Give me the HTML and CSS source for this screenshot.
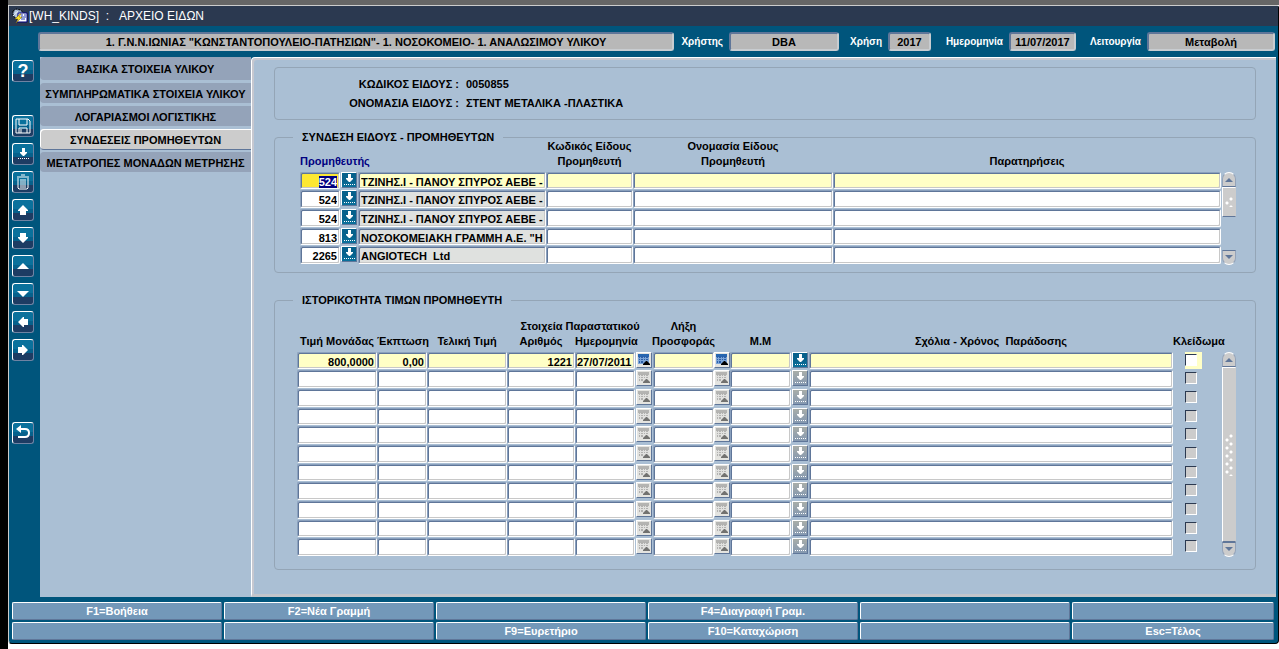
FILE: index.html
```
<!DOCTYPE html>
<html lang="el">
<head>
    <meta charset="UTF-8">
    <meta name="viewport" content="width=device-width, initial-scale=1.0">
    <title>[WH_KINDS] : ΑΡΧΕΙΟ ΕΙΔΩΝ</title>
    <link rel="stylesheet" href="styles.css">
</head>
<body>
    <!-- icon shapes -->
    <svg class="symbols" aria-hidden="true">
        <symbol id="i-list" viewBox="0 0 12 12"><path d="M5 0h3v4h2v1L7 8H6L3 5V4h2zM1 10h1v1H1zM3 10h1v1H3zM5 10h1v1H5zM7 10h1v1H7zM9 10h1v1H9zM11 10h1v1h-1z"/></symbol>
        <symbol id="i-up" viewBox="0 0 12 12"><path d="M6 1l5 5v1H9v4H3V7H1V6z"/></symbol>
        <symbol id="i-triangle" viewBox="0 0 12 12"><path d="M6 3l6 6H0z"/></symbol>
        <symbol id="i-calendar" viewBox="0 0 14 14">
            <path class="cal-top" d="M1 1h11v3H1z"/><path class="cal-page" d="M1 4h11v7H1z"/>
            <path class="cal-grid" d="M2 3h1v2H2zM4 3h2v2H4zM7 3h1v2H7zM9 3h2v2H9zM2 6h1v1H2zM4 6h2v1H4zM7 6h1v1H7zM9 6h2v1H9zM2 8h1v2H2zM4 8h2v2H4z"/>
            <path class="cal-arrow" d="M9 8h1l3 3v1H6v-1z"/>
        </symbol>
    </svg>

    <div class="strip"></div>
    <div class="window">
        <header class="titlebar">
            <svg class="logo" viewBox="0 0 16 16">
                <path d="M1 3l3-2 5 1 2 3-2 5-5 1-3-4z" fill="#8fa6c4" stroke="#000" stroke-dasharray="2 1"/>
                <path d="M2 5h5M4 2v7M1 8l5-5" stroke="#dce6f2"/>
                <path d="M6 5h9v9H4l2-3z" fill="#fff" stroke="#000080"/>
                <path d="M9 7h2M12 7h2M9 9h5M9 11h4" stroke="#2038b0"/>
                <path d="M8 6L3 11h3l-2 4 6-6H7l2-3z" fill="#ffe32b" stroke="#806c00" stroke-width=".5"/>
            </svg>
            <h1>[WH_KINDS] &nbsp;: &nbsp;&nbsp;ΑΡΧΕΙΟ ΕΙΔΩΝ</h1>
        </header>

        <div class="context">
            <input class="unit" aria-label="Μονάδα" readonly value='1. Γ.Ν.Ν.ΙΩΝΙΑΣ "ΚΩΝΣΤΑΝΤΟΠΟΥΛΕΙΟ-ΠΑΤΗΣΙΩΝ"- 1. ΝΟΣΟΚΟΜΕΙΟ- 1. ΑΝΑΛΩΣΙΜΟΥ ΥΛΙΚΟΥ'>
            <label for="user" class="l-user">Χρήστης</label>
            <input id="user" class="w-user" readonly value="DBA">
            <label for="year" class="l-year">Χρήση</label>
            <input id="year" class="w-year" readonly value="2017">
            <label for="date" class="l-date">Ημερομηνία</label>
            <input id="date" class="w-date" readonly value="11/07/2017">
            <label for="mode" class="l-mode">Λειτουργία</label>
            <input id="mode" class="w-mode" readonly value="Μεταβολή">
        </div>

        <div class="main">
            <nav class="toolbar">
                <button class="help" aria-label="Βοήθεια">?</button>
                <button aria-label="Αποθήκευση"><svg class="outline" viewBox="0 0 16 16"><path d="M1 1h12l2 2v12H1zM4 1v6h8V1M4 15v-5h8v5M6 11v4"/></svg></button>
                <button aria-label="Λίστα τιμών"><svg viewBox="0 0 12 12"><use href="#i-list"/></svg></button>
                <button aria-label="Διαγραφή"><svg class="outline" viewBox="0 0 16 16"><path d="M3 4v10l1 1h8l1-1V4M2 3h12M6 1h4M6 5v9M8 5v9M10 5v9"/></svg></button>
                <button aria-label="Προηγούμενη εγγραφή"><svg viewBox="0 0 12 12"><use href="#i-up"/></svg></button>
                <button aria-label="Επόμενη εγγραφή"><svg class="down" viewBox="0 0 12 12"><use href="#i-up"/></svg></button>
                <button aria-label="Προηγούμενη σελίδα"><svg viewBox="0 0 12 12"><use href="#i-triangle"/></svg></button>
                <button aria-label="Επόμενη σελίδα"><svg class="down" viewBox="0 0 12 12"><use href="#i-triangle"/></svg></button>
                <button aria-label="Προηγούμενο πεδίο"><svg class="left" viewBox="0 0 12 12"><use href="#i-up"/></svg></button>
                <button aria-label="Επόμενο πεδίο"><svg class="right" viewBox="0 0 12 12"><use href="#i-up"/></svg></button>
                <button class="back" aria-label="Επιστροφή"><svg viewBox="0 0 16 16"><path d="M4 4h6q4 0 4 4t-4 4H3" fill="none" stroke="#fff" stroke-width="2"/><path d="M6 0v8L1 4z"/></svg></button>
            </nav>

            <nav class="tabs">
                <button>ΒΑΣΙΚΑ ΣΤΟΙΧΕΙΑ ΥΛΙΚΟΥ</button>
                <button>ΣΥΜΠΛΗΡΩΜΑΤΙΚΑ ΣΤΟΙΧΕΙΑ ΥΛΙΚΟΥ</button>
                <button>ΛΟΓΑΡΙΑΣΜΟΙ ΛΟΓΙΣΤΙΚΗΣ</button>
                <button class="active">ΣΥΝΔΕΣΕΙΣ ΠΡΟΜΗΘΕΥΤΩΝ</button>
                <button>ΜΕΤΑΤΡΟΠΕΣ ΜΟΝΑΔΩΝ ΜΕΤΡΗΣΗΣ</button>
            </nav>

            <section class="panel">
                <dl class="item">
                    <dt>ΚΩΔΙΚΟΣ ΕΙΔΟΥΣ :</dt><dd>0050855</dd>
                    <dt>ΟΝΟΜΑΣΙΑ ΕΙΔΟΥΣ :</dt><dd>ΣΤΕΝΤ ΜΕΤΑΛΙΚΑ -ΠΛΑΣΤΙΚΑ</dd>
                </dl>

                <fieldset class="suppliers">
                    <legend>ΣΥΝΔΕΣΗ ΕΙΔΟΥΣ - ΠΡΟΜΗΘΕΥΤΩΝ</legend>
                    <div class="block">
                        <table>
                            <colgroup><col class="c40"><col class="c18"><col class="c188"><col class="c87"><col class="c200"><col></colgroup>
                            <thead>
                                <tr>
                                    <th colspan="3" class="key">Προμηθευτής</th>
                                    <th>Κωδικός Είδους<br>Προμηθευτή</th>
                                    <th>Ονομασία Είδους<br>Προμηθευτή</th>
                                    <th>Παρατηρήσεις</th>
                                </tr>
                            </thead>
                            <tbody id="suppliers"></tbody>
                        </table>
                        <div class="scroll">
                            <button aria-label="Πάνω"><svg viewBox="0 0 12 12"><use href="#i-triangle"/></svg></button>
                            <div class="thumb"><i></i></div>
                            <button class="end" aria-label="Κάτω"><svg viewBox="0 0 12 12"><use href="#i-triangle"/></svg></button>
                        </div>
                    </div>
                </fieldset>

                <fieldset class="history">
                    <legend>ΙΣΤΟΡΙΚΟΤΗΤΑ ΤΙΜΩΝ ΠΡΟΜΗΘΕΥΤΗ</legend>
                    <div class="block">
                        <table>
                            <colgroup><col class="c80"><col class="c50"><col class="c80"><col class="c68"><col class="c60"><col class="c18"><col class="c61"><col class="c16"><col class="c61"><col class="c18"><col><col class="c48"></colgroup>
                            <thead>
                                <tr class="over">
                                    <th colspan="3"></th>
                                    <th colspan="3">Στοιχεία Παραστατικού</th>
                                    <th>Λήξη</th>
                                    <th colspan="5"></th>
                                </tr>
                                <tr class="under">
                                    <th>Τιμή Μονάδας</th>
                                    <th>Έκπτωση</th>
                                    <th>Τελική Τιμή</th>
                                    <th>Αριθμός</th>
                                    <th>Ημερομηνία</th>
                                    <th></th>
                                    <th><span class="wide">Προσφοράς</span></th>
                                    <th></th>
                                    <th>Μ.Μ</th>
                                    <th></th>
                                    <th>Σχόλια - Χρόνος &nbsp;Παράδοσης</th>
                                    <th>Κλείδωμα</th>
                                </tr>
                            </thead>
                            <tbody id="history"></tbody>
                        </table>
                        <div class="scroll">
                            <button aria-label="Πάνω"><svg viewBox="0 0 12 12"><use href="#i-triangle"/></svg></button>
                            <div class="thumb full"><i></i></div>
                            <button class="end" aria-label="Κάτω"><svg viewBox="0 0 12 12"><use href="#i-triangle"/></svg></button>
                        </div>
                    </div>
                </fieldset>
            </section>
        </div>

        <footer class="keys">
            <button>F1=Βοήθεια</button>
            <button>F2=Νέα Γραμμή</button>
            <button></button>
            <button>F4=Διαγραφή Γραμ.</button>
            <button></button>
            <button></button>
            <button></button>
            <button></button>
            <button>F9=Ευρετήριο</button>
            <button>F10=Καταχώριση</button>
            <button></button>
            <button>Esc=Τέλος</button>
        </footer>
    </div>

    <script>
        'use strict';
        const suppliers = [
            ['524', 'ΤΖΙΝΗΣ.Ι - ΠΑΝΟΥ ΣΠΥΡΟΣ ΑΕΒΕ -ΕΙ'],
            ['524', 'ΤΖΙΝΗΣ.Ι - ΠΑΝΟΥ ΣΠΥΡΟΣ ΑΕΒΕ -ΕΙ'],
            ['524', 'ΤΖΙΝΗΣ.Ι - ΠΑΝΟΥ ΣΠΥΡΟΣ ΑΕΒΕ -ΕΙ'],
            ['813', 'ΝΟΣΟΚΟΜΕΙΑΚΗ ΓΡΑΜΜΗ Α.Ε. "HO'],
            ['2265', 'ANGIOTECH  Ltd'],
        ];
        const prices = [['800,0000', '0,00', '', '1221', '27/07/2011']];
        const historyRows = 11;

        function field(label, value = '', cls = ''){
            return `<td><input class="field ${cls}" aria-label="${label}" value="${value.replace(/"/g, '&quot;')}"></td>`;
        }

        function picker(icon, label, off = false){
            const box = icon == 'calendar' ? 14 : 12;
            return `<td class="tool"><button class="pick ${icon}" aria-label="${label}" ${off ? 'disabled' : ''}><svg viewBox="0 0 ${box} ${box}"><use href="#i-${icon}"/></svg></button></td>`;
        }

        document.querySelector('#suppliers').innerHTML = suppliers.map((row, index) =>
            `<tr class="${index == 0 ? 'current' : ''}">`
            + field('Προμηθευτής', row[0], 'num')
            + picker('list', 'Λίστα προμηθευτών')
            + field('Επωνυμία', row[1], 'name')
            + field('Κωδικός Είδους Προμηθευτή')
            + field('Ονομασία Είδους Προμηθευτή')
            + field('Παρατηρήσεις')
            + '</tr>'
        ).join('');

        let rows = '';
        for (let i = 0; i < historyRows; i++){
            const row = prices[i] || [];
            const off = !prices[i];
            rows += `<tr class="${i == 0 ? 'current' : ''}">`
                + field('Τιμή Μονάδας', row[0], 'num')
                + field('Έκπτωση', row[1], 'num')
                + field('Τελική Τιμή', row[2], 'num')
                + field('Αριθμός', row[3], 'num')
                + field('Ημερομηνία', row[4], 'day')
                + picker('calendar', 'Ημερολόγιο', off)
                + field('Λήξη Προσφοράς', '', 'day')
                + picker('calendar', 'Ημερολόγιο', off)
                + field('Μ.Μ')
                + picker('list', 'Λίστα μονάδων', off)
                + field('Σχόλια')
                + `<td class="lock"><span><input type="checkbox" aria-label="Κλείδωμα" ${off ? 'disabled' : ''}></span></td></tr>`;
        }
        document.querySelector('#history').innerHTML = rows;

        // the form opens on the first supplier code
        const first = document.querySelector('#suppliers input');
        first.focus();
        first.select();
    </script>
</body>
</html>
```
FILE: styles.css
```
* {margin: 0; padding: 0; box-sizing: border-box;}
body {background-color: #fff; border-left: 8px solid #000; min-height: 100vh; font-family: "Liberation Sans", Arial, sans-serif; font-size: 11px; font-weight: 700; line-height: 15px; color: #000;}
button, input {font: inherit; color: inherit; border-radius: 0;}
button {border: none; cursor: pointer;}
input:focus {outline: none;}
svg {display: block; fill: #fff;}
.symbols {position: absolute; width: 0; height: 0;}
.strip {height: 5px; background-color: #666;}

.window {background-color: #00557c; border-top: 1px solid #ccc; border-left: 1px solid #ccc; border-right: 1px solid #000; border-bottom: 1px solid #000; border-radius: 2px 3px 4px 4px;}
.titlebar {height: 20px; background-color: #2b3950; padding-left: 3px; display: flex; align-items: center; gap: 1px;}
.titlebar h1 {font-size: 12px; font-weight: 400; color: #fff;}
.logo {width: 16px; height: 16px;}

.context {height: 31px; padding: 0 3px 0 29px; display: flex; align-items: center;}
.context input {height: 19px; background-color: #b8b8b8; border: 2px solid; border-color: #5f7699 #c8ccd0 #c8ccd0 #5f7699; border-radius: 3px; text-align: center; text-overflow: clip;}
.context label {flex: none; color: #fff; font-size: 10px; padding-right: 6px; text-align: right;}
.context .unit {flex: 1; min-width: 0;}
.l-user {width: 55px;}
.l-year {width: 49px;}
.l-date {width: 78px;}
.l-mode {width: 71px;}
.w-user {width: 110px;}
.w-year {width: 43px;}
.w-date {width: 67px;}
.w-mode {width: 128px;}

.main {display: flex; padding-right: 2px;}
.toolbar {width: 31px; flex: none; padding: 3px; display: flex; flex-direction: column; gap: 6px;}
.toolbar button {width: 22px; height: 22px; background: linear-gradient(#0a719c 0 45%, #06618c 45% 65%, #1d3c63 65%); border: 1px solid; border-color: #fff #6f83a3 #6f83a3 #fff; border-radius: 3px; display: flex; align-items: center; justify-content: center; color: #fff;}
.toolbar svg {width: 12px; height: 12px;}
.toolbar svg[viewBox="0 0 16 16"] {width: 16px; height: 16px;}
.outline {fill: none; stroke: #fff;}
.toolbar .help {font-size: 18px; margin-bottom: 27px;}
.toolbar .back {margin-top: 55px;}
.down {transform: rotate(180deg);}
.left {transform: rotate(-90deg);}
.right {transform: rotate(90deg);}

.tabs {width: 211px; flex: none; background-color: #aabfd4; display: flex; flex-direction: column; gap: 3px;}
.tabs button {height: 20px; padding-top: 2px; background-color: #94a3b9; border-radius: 4px 0 0 4px; white-space: nowrap;}
.tabs button:first-child {height: 23px;}
.tabs .active {background-color: #ccc; box-shadow: inset 1px 1px #fff, 0 1px #5f7699;}

.panel {flex: 1; min-width: 0; background-color: #aabfd4; padding: 9px 20px 24px 22px; border-top: 1px solid #fff; border-left: 1px solid #fff; border-bottom: 3px solid #c3c5cb; border-top-left-radius: 4px; box-shadow: inset 2px 2px #c6c8d0;}
.item {height: 53px; border: 1px solid #94a5b6; border-radius: 4px; display: grid; grid-template-columns: 184px 1fr; grid-auto-rows: 19px; align-content: center; align-items: center; column-gap: 7px;}
.item dt {text-align: right;}

fieldset {border: 1px solid #94a5b6; border-radius: 4px; min-width: 0;}
legend {padding: 0 9px;}
.suppliers {margin-top: 10px; padding: 0 19px 7px 25px;}
.suppliers legend {margin-left: -7px;}
.history {margin-top: 20px; padding: 0 19px 12px 22px;}
.history legend {margin-left: -4px;}
.block {display: flex; gap: 1px;}
.suppliers .block {margin-top: -6px;}
.history .block {margin-top: 11px;}

table {flex: 1; min-width: 0; width: 100%; table-layout: fixed; border-collapse: collapse;}
th {height: 33px; padding-bottom: 3px; vertical-align: bottom; white-space: nowrap;}
.over th {height: 15px; padding: 0;}
.under th {height: 18px;}
.wide {margin: 0 -4px;}
.key {text-align: left; color: #000080;}
.c16 {width: 16px;}
.c18 {width: 18px;}
.c40 {width: 40px;}
.c48 {width: 48px;}
.c50 {width: 50px;}
.c60 {width: 60px;}
.c61 {width: 61px;}
.c68 {width: 68px;}
.c80 {width: 80px;}
.c87 {width: 87px;}
.c188 {width: 188px;}
.c200 {width: 200px;}
td {height: 19px; vertical-align: top;}
tbody tr:nth-child(3n+1) td {height: 18px;}
.field {display: block; width: 100%; height: 18px; padding: 2px 2px 0; background-color: #fff; border: 1px solid; border-color: #8aa0bd #fff #fff #8aa0bd; border-radius: 2px; box-shadow: inset 1px 1px #5f7699, inset -1px -1px #c8c8c8;}
tbody tr:nth-child(3n+1) .field {height: 17px;}
.num {text-align: right;}
.day {padding: 2px 0 0 1px;}
.name {background-color: #dfe1df;}
.current .field {background-color: #ffffc6;}
#suppliers .current .num {background-color: #fde833;}
.num::selection {background-color: #000080; color: #fff;}

.pick {display: flex; align-items: center; justify-content: center; width: 16px; height: 16px; margin: 0 auto; border: 1px solid; border-color: #fff #5f7699 #5f7699 #fff; background: linear-gradient(#06618c 50%, #0a719c);}
.pick svg {flex: none; width: 12px; height: 12px;}
.pick:disabled {background: linear-gradient(#a9aea9, #8498b0);}
.calendar, .calendar:disabled {background: #e4e4e0;}
.calendar svg {width: 14px; height: 14px;}
.cal-top {fill: #2666b0;}
.cal-page {fill: #7aa4d8;}
.cal-grid {fill: #2c5fa8;}
.cal-arrow {fill: #000;}
.calendar:disabled svg {filter: grayscale(1) brightness(1.4) opacity(.5);}

.lock {padding-left: 12px;}
.lock span {display: block; width: 17px; height: 17px; padding-top: 2px;}
.lock input {display: block; appearance: none; width: 12px; height: 12px; background-color: #ccc; border: 1px solid; border-color: #2b3950 #fff #fff #2b3950;}
.current .lock span {background-color: #ffffc6;}
.current .lock input {background-color: #fff;}

.scroll {flex: none; width: 14px; margin-top: 33px; display: flex; flex-direction: column;}
.scroll button {flex: none; height: 15px; background-color: #ccc; border: 1px solid; border-color: #fff #94a3b9 #5f7699 #94a3b9; border-radius: 7px 7px 0 0; display: flex; align-items: center; justify-content: center;}
.scroll svg {width: 8px; height: 8px; fill: #5f7699;}
.scroll .end {margin-top: auto; transform: rotate(180deg);}
.thumb {height: 30px; background-color: #ccc; border: 1px solid; border-color: #fff #ccc #5f7699 #fff; display: flex; align-items: center; justify-content: center;}
.thumb i {width: 8px; height: 10px; background: radial-gradient(circle at 2px 6px, #fff 1px, transparent 2px), radial-gradient(circle at 6px 2px, #fff 1px, transparent 2px); background-size: 8px 8px;}
.thumb.full {height: auto; flex: 1;}
.thumb.full i {height: 42px;}

.keys {padding: 5px 4px 3px 3px; display: grid; grid-template-columns: repeat(5, 210fr) 202fr; grid-auto-rows: 18px; gap: 2px;}
.keys button {background-color: #7398b9; color: #fff; border: 1px solid; border-color: #fff #5f7699 #5f7699 #fff; border-radius: 2px;}
```
